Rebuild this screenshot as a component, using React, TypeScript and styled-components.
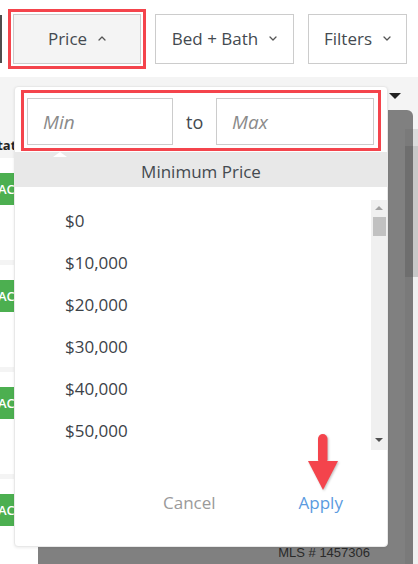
import React from 'react';
import styled, { createGlobalStyle } from 'styled-components';

const GlobalStyle = createGlobalStyle`
  html, body {
    margin: 0;
    padding: 0;
  }
  body {
    background: #fff;
    font-family: "Open Sans", "Noto Sans", sans-serif;
  }
`;

const Page = styled.div`
  position: relative;
  width: 418px;
  height: 564px;
  overflow: hidden;
  background: #fff;
`;

const TopBar = styled.div`
  display: flex;
  align-items: center;
  height: 77px;
  background: #fff;
`;

const PrevEdge = styled.div`
  width: 2px;
  height: 48px;
  margin-right: 6px;
  background: #4d4d4d;
`;

const Highlight = styled.div`
  border: 3px solid #f4444c;
  padding: 2px;
  margin-right: 9px;
`;

const FilterButton = styled.button<{ $w: number; $active?: boolean }>`
  display: flex;
  align-items: center;
  justify-content: center;
  gap: 11px;
  box-sizing: border-box;
  width: ${(p) => p.$w}px;
  height: 50px;
  margin: 0;
  padding: 0;
  border: 1px solid #cccccc;
  background: ${(p) => (p.$active ? '#f4f4f4' : '#fff')};
  color: #444a50;
  font-family: inherit;
  font-size: 17px;
`;

const Chevron = ({ up }: { up?: boolean }) => (
  <svg width="8" height="5" viewBox="0 0 8 5">
    <path
      d={up ? 'M1 4 L4 1 L7 4' : 'M1 1 L4 4 L7 1'}
      fill="none"
      stroke="#555"
      strokeWidth="1.3"
      strokeLinecap="round"
      strokeLinejoin="round"
    />
  </svg>
);

const Main = styled.div`
  display: flex;
  height: 487px;
  background: #f4f4f4;
`;

const LeftCol = styled.div`
  width: 38px;
  flex-shrink: 0;
  display: flex;
  flex-direction: column;
`;

const StatusHead = styled.div`
  flex-shrink: 0;
  height: 81px;
  box-sizing: border-box;
  display: flex;
  align-items: flex-end;
  padding-bottom: 4px;
`;

const StatusText = styled.span`
  margin-left: -10px;
  font-family: "Open Sans", sans-serif;
  font-weight: 700;
  font-size: 13px;
  color: #222;
`;

const Card = styled.div`
  flex-shrink: 0;
  height: 102px;
  margin-bottom: 5px;
  padding-top: 15px;
  box-sizing: border-box;
  background: #fff;
`;

const Badge = styled.div`
  width: 60px;
  height: 32px;
  margin-left: -2px;
  background: #4caf50;
  color: #fff;
  font-weight: 600;
  font-size: 13px;
  line-height: 32px;
`;

const RightArea = styled.div`
  flex: 1;
  display: flex;
  flex-direction: column;
`;

const SortRow = styled.div`
  height: 33px;
  display: flex;
  justify-content: flex-end;
  padding: 16px 17px 0 0;
  box-sizing: border-box;
`;

const SortCaret = styled.div`
  width: 0;
  height: 0;
  border-left: 6px solid transparent;
  border-right: 6px solid transparent;
  border-top: 6px solid #222;
`;

const Lower = styled.div`
  flex: 1;
  display: flex;
`;

const Panel = styled.div`
  flex: 1;
  display: flex;
  background: #808080;
  border-radius: 6px 6px 0 0;
`;

const PanelBody = styled.div`
  flex: 1;
  display: flex;
  flex-direction: column;
  justify-content: flex-end;
  align-items: flex-end;
  padding: 0 35px 4px 0;
`;

const MlsText = styled.span`
  font-family: "Liberation Sans", Arial, sans-serif;
  font-size: 13px;
  color: #2a2a2a;
`;

const ScrollCol = styled.div<{ $track: string; $head: string }>`
  width: ${(p) => (p.$head === 'page' ? 5 : 8)}px;
  margin-top: 19px;
  display: flex;
  flex-direction: column;
  background: ${(p) => p.$track};
`;

const ScrollHead = styled.div<{ $c: string }>`
  height: 17px;
  background: ${(p) => p.$c};
`;

const ScrollThumb = styled.div<{ $c: string }>`
  height: 131px;
  background: ${(p) => p.$c};
`;

const Popover = styled.div`
  position: absolute;
  left: 14px;
  top: 86px;
  width: 374px;
  height: 461px;
  box-sizing: border-box;
  display: flex;
  flex-direction: column;
  background: #fff;
  border: 1px solid #e8e8e8;
  border-radius: 4px;
  box-shadow: 0 1px 3px rgba(0, 0, 0, 0.08);
`;

const RangeBox = styled.div`
  display: flex;
  align-items: center;
  height: 61px;
  margin: 3px 6px 0 6px;
  padding: 2px 4px 0 3px;
  box-sizing: border-box;
  border: 3px solid #f4444c;
`;

const PriceInput = styled.input<{ $w: number }>`
  width: ${(p) => p.$w}px;
  height: 47px;
  box-sizing: border-box;
  margin: 0;
  padding: 0 0 0 15px;
  border: 1px solid #cccccc;
  outline: none;
  font-family: "Open Sans", sans-serif;
  font-style: italic;
  font-size: 19px;
  color: #444;
  &::placeholder {
    color: #8a8a8a;
  }
`;

const ToLabel = styled.span`
  width: 17px;
  margin: 0 13px;
  text-align: center;
  font-size: 18px;
  color: #444a50;
`;

const ListHeader = styled.div`
  position: relative;
  height: 35px;
  margin-top: 1px;
  padding-top: 5px;
  box-sizing: border-box;
  background: #e8e8e8;
  text-align: center;
  font-size: 17px;
  line-height: 30px;
  color: #444a50;
`;

const Notch = styled.div`
  position: absolute;
  left: 38px;
  top: 0;
  width: 0;
  height: 0;
  border-left: 7px solid transparent;
  border-right: 7px solid transparent;
  border-bottom: 5px solid #fff;
`;

const List = styled.div`
  display: flex;
  height: 250px;
  margin-top: 13px;
`;

const Options = styled.ul`
  flex: 1;
  margin: 0;
  padding: 0 0 0 50px;
  list-style: none;
  overflow: hidden;
`;

const Option = styled.li`
  height: 42px;
  line-height: 42px;
  font-size: 17px;
  color: #3c4248;
`;

const Track = styled.div`
  width: 16px;
  display: flex;
  flex-direction: column;
  align-items: center;
  background: #f0f0f0;
`;

const TrackArrow = styled.div<{ $down?: boolean }>`
  width: 0;
  height: 0;
  margin: ${(p) => (p.$down ? 'auto 0 8px' : '6px 0 0')};
  border-left: 4px solid transparent;
  border-right: 4px solid transparent;
  ${(p) =>
    p.$down
      ? 'border-top: 4px solid #505050;'
      : 'border-bottom: 4px solid #a3a3a3;'}
`;

const TrackThumb = styled.div`
  width: 13px;
  height: 19px;
  margin-top: 7px;
  background: #c1c1c1;
`;

const Footer = styled.div`
  flex: 1;
  display: flex;
  align-items: center;
  padding: 9px 0 0 148px;
`;

const TextButton = styled.button<{ $primary?: boolean }>`
  margin: 0 0 0 ${(p) => (p.$primary ? 83 : 0)}px;
  padding: 0;
  border: none;
  background: none;
  font-family: inherit;
  font-size: 17px;
  color: ${(p) => (p.$primary ? '#5b9be0' : '#9a9a9a')};
`;

const PointerArrow = styled.svg`
  position: absolute;
  left: 306px;
  top: 432px;
  filter: drop-shadow(1px 1px 1px rgba(0, 0, 0, 0.25));
`;

const prices = ['$0', '$10,000', '$20,000', '$30,000', '$40,000', '$50,000', '$60,000'];

export default function App() {
  return (
    <Page>
      <GlobalStyle />
      <TopBar>
        <PrevEdge />
        <Highlight>
          <FilterButton $w={128} $active>
            Price <Chevron up />
          </FilterButton>
        </Highlight>
        <FilterButton $w={139} style={{ marginRight: 14 }}>
          Bed + Bath <Chevron />
        </FilterButton>
        <FilterButton $w={99}>
          Filters <Chevron />
        </FilterButton>
      </TopBar>

      <Main>
        <LeftCol>
          <StatusHead>
            <StatusText>Status</StatusText>
          </StatusHead>
          {[0, 1, 2, 3].map((i) => (
            <Card key={i}>
              <Badge>ACTIVE</Badge>
            </Card>
          ))}
        </LeftCol>
        <RightArea>
          <SortRow>
            <SortCaret />
          </SortRow>
          <Lower>
            <Panel>
              <PanelBody>
                <MlsText>MLS # 1457306</MlsText>
              </PanelBody>
              <ScrollCol $track="#7a7a7a" $head="panel">
                <ScrollHead $c="#7a7a7a" />
                <ScrollThumb $c="#6e6e6e" />
              </ScrollCol>
            </Panel>
            <ScrollCol $track="#f0f0f0" $head="page">
              <ScrollHead $c="#dcdcdc" />
              <ScrollThumb $c="#c8c8c8" />
            </ScrollCol>
          </Lower>
        </RightArea>
      </Main>

      <Popover>
        <RangeBox>
          <PriceInput $w={146} placeholder="Min" />
          <ToLabel>to</ToLabel>
          <PriceInput $w={158} placeholder="Max" />
        </RangeBox>
        <ListHeader>
          <Notch />
          Minimum Price
        </ListHeader>
        <List>
          <Options>
            {prices.map((p) => (
              <Option key={p}>{p}</Option>
            ))}
          </Options>
          <Track>
            <TrackArrow />
            <TrackThumb />
            <TrackArrow $down />
          </Track>
        </List>
        <Footer>
          <TextButton>Cancel</TextButton>
          <TextButton $primary>Apply</TextButton>
        </Footer>
      </Popover>

      <PointerArrow width="34" height="60" viewBox="0 0 34 60">
        <rect x="12" y="2" width="9.5" height="30" rx="4.75" fill="#f4444c" />
        <polygon points="2,29 32,29 17,58" fill="#f4444c" />
      </PointerArrow>
    </Page>
  );
}
